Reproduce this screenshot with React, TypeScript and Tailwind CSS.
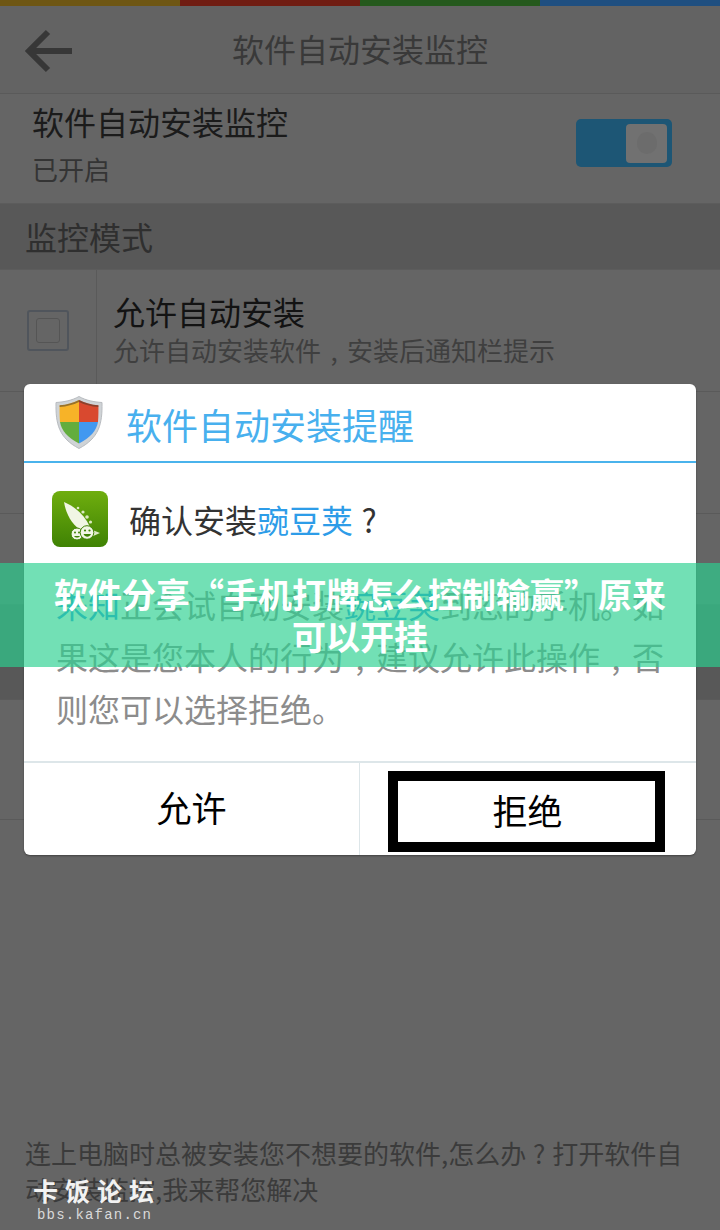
const cjk = "font-['Noto_Sans_CJK_SC','Liberation_Sans',sans-serif]"

// the source phone font puts these marks in the middle of a full-width cell
function Mark({ c }: { c: string }) {
  return <span className="inline-block w-[1em] text-center">{c}</span>
}

function Shield() {
  return (
    <svg width="48" height="53" viewBox="0 0 48 53" className="shrink-0">
      <path d="M24 0.5 C31 4.5 39 6 47 6.5 C47.5 28 44 42 24 52.5 C4 42 0.5 28 1 6.5 C9 6 17 4.5 24 0.5Z" fill="#cfd3d6" stroke="#b9bcc0" />
      <path d="M24 4 V26 H5 C4.5 20 4.5 14 4.6 9.3 C12 8.8 18 7 24 4Z" fill="#f7b328" />
      <path d="M24 4 V26 H43 C43.5 20 43.5 14 43.4 9.3 C36 8.8 30 7 24 4Z" fill="#d9492f" />
      <path d="M24 26 V47.5 C13 41.5 6.5 35 5 26Z" fill="#63ad3d" />
      <path d="M24 26 V47.5 C35 41.5 41.5 35 43 26Z" fill="#4198f0" />
      <path d="M24 4 C18 7 12 8.8 4.6 9.3 L4.6 11 C12 10.5 18 8.8 24 6 C30 8.8 36 10.5 43.4 11 L43.4 9.3 C36 8.8 30 7 24 4Z" fill="#4a3a2a" opacity="0.55" />
    </svg>
  )
}

function PeaLogo() {
  return (
    <svg width="56" height="56" viewBox="0 0 56 56" className="shrink-0">
      <defs>
        <linearGradient id="pea-bg" x1="0" y1="0" x2="0" y2="1">
          <stop offset="0" stopColor="#6fae0e" />
          <stop offset="1" stopColor="#3f8204" />
        </linearGradient>
      </defs>
      <rect width="56" height="56" rx="8" fill="url(#pea-bg)" />
      <path d="M12 11 C24 16 33 25 38 36 L30 40 C21 35 14 24 12 11Z" fill="#f1f6e4" />
      <circle cx="26" cy="17" r="1.3" fill="#dbe8c0" />
      <circle cx="31" cy="21" r="1.6" fill="#dbe8c0" />
      <circle cx="35" cy="26" r="1.8" fill="#dbe8c0" />
      <circle cx="38.5" cy="31" r="1.6" fill="#dbe8c0" />
      <path d="M38 38 L48 42 L39 46Z" fill="#dce9c4" />
      <circle cx="25" cy="43" r="6" fill="#f1f6e4" stroke="#3f8204" />
      <circle cx="35" cy="41.5" r="6.8" fill="#f1f6e4" stroke="#3f8204" />
      <circle cx="23" cy="41.5" r="1" fill="#3f8204" />
      <circle cx="27" cy="41.5" r="1" fill="#3f8204" />
      <circle cx="33" cy="39.5" r="1.1" fill="#3f8204" />
      <circle cx="37.5" cy="39.5" r="1.1" fill="#3f8204" />
      <path d="M31.5 43 C33 46.5 37.5 46.5 39 43Z" fill="#3f8204" />
      <path d="M22 45 C23.5 47 26.5 47 28 45Z" fill="#3f8204" />
    </svg>
  )
}

function CheckRow({ children }: { children?: React.ReactNode }) {
  return (
    <div className="flex h-[122px] border-b border-[#5a5a5a]">
      <div className="flex w-[97px] shrink-0 items-center justify-center border-r border-[#5a5a5a] pr-[1px]">
        <div className="flex h-[41px] w-[42px] items-center justify-center rounded-[3px] border-2 border-[#50555c]">
          <div className="h-[25px] w-[24px] rounded-[3px] border border-[#555555]" />
        </div>
      </div>
      {children}
    </div>
  )
}

export default function App() {
  return (
    <div className={`relative flex h-[1230px] w-[720px] flex-col overflow-hidden bg-[#656565] ${cjk}`}>
      <div className="flex h-[6px]">
        <div className="flex-1 bg-[#6e5613]" />
        <div className="flex-1 bg-[#701d12]" />
        <div className="flex-1 bg-[#25591d]" />
        <div className="flex-1 bg-[#1f4f80]" />
      </div>

      <header className="relative flex h-[88px] items-center justify-center border-b border-[#5a5a5a] bg-[#636363] pb-1">
        <svg width="48" height="44" viewBox="0 0 48 44" className="absolute left-[25px] top-[23px]">
          <path d="M47 22 H5 M23 3 L4 22 L23 41" fill="none" stroke="#373737" strokeWidth="6" />
        </svg>
        <h1 className="text-[32px] font-normal leading-none text-[#393939]">软件自动安装监控</h1>
      </header>

      <div className="flex h-[109px] items-start justify-between pl-[32px] pr-[48px] pt-[5px]">
        <div>
          <div className="text-[32px] leading-[44px] text-[#1b1b1b]">软件自动安装监控</div>
          <div className="mt-[8px] text-[26px] leading-[36px] text-[#343434]">已开启</div>
        </div>
        <div className="mt-[20px] flex h-[48px] w-[96px] items-center justify-end rounded-[5px] bg-[#1d5675] pr-[5px]">
          <div className="flex h-[39px] w-[41px] items-center justify-center rounded-[4px] bg-[#717171]">
            <div className="h-[22px] w-[20px] rounded-full bg-[#6c6c6c]" />
          </div>
        </div>
      </div>

      <div className="flex h-[67px] items-center border-y border-[#5c5c5c] bg-[#585858] pb-[2px] pl-[25px] text-[32px] text-[#2f2f2f]">
        监控模式
      </div>

      <CheckRow>
        <div className="pl-[16px] pt-[19px]">
          <div className="text-[32px] leading-[44px] text-[#131313]">允许自动安装</div>
          <div className="text-[26px] leading-[34px] text-[#3f3f3f]">
            允许自动安装软件<Mark c="," />安装后通知栏提示
          </div>
        </div>
      </CheckRow>
      <CheckRow />
      <div className="h-[90px]" />
      <div className="h-[95px] border-t border-[#5a5a5a] bg-[#585858]" />
      <div className="h-[121px] border-y border-[#5a5a5a]" />

      <div className="mt-auto pl-[25px] pr-[30px] pb-[23px] text-[26px] leading-[36px] text-[#3b3b3b]">
        连上电脑时总被安装您不想要的软件,怎么办<Mark c="?" />打开软件自动安装监控,我来帮您解决
      </div>

      <div className="absolute left-[24px] top-[384px] flex h-[471px] w-[672px] flex-col rounded-[6px] bg-white shadow-[0_1px_2px_rgba(0,0,0,0.35)]">
        <div className="flex h-[79px] items-center border-b-2 border-[#4ab3ec] pl-[31px]">
          <Shield />
          <span className="ml-[23px] mt-[2px] text-[36px] leading-none text-[#48b0ee]">软件自动安装提醒</span>
        </div>
        <div className="flex items-center pl-[28px] pt-[28px]">
          <PeaLogo />
          <span className="ml-[21px] text-[32px] leading-none text-[#333333]">
            确认安装<span className="text-[#2d9ce8]">豌豆荚</span><Mark c="?" />
          </span>
        </div>
        <p className="mt-[31px] pl-[32px] pr-[28px] text-[32px] leading-[52px] text-[#8c8c8c]">
          <span className="text-[#2d9ce8]">未知</span>正会试自动安装<span className="text-[#2d9ce8]">豌豆荚</span>到您的手机。如果这是您本人的行为<Mark c="," />建议允许此操作<Mark c="," />否则您可以选择拒绝。
        </p>
        <div className="mt-auto flex h-[94px] border-t-2 border-[#dde6e9]">
          <div className="flex w-1/2 items-center justify-center border-r border-[#dde6e9] pb-[3px] text-[35px] text-black">允许</div>
          <div className="flex w-1/2 items-start pl-[28px] pt-[8px]">
            <div className="flex h-[81px] w-[277px] items-center justify-center border-[10px] border-black pb-[3px] pl-[2px] text-[35px] text-black">拒绝</div>
          </div>
        </div>
      </div>

      <div className="absolute left-0 top-[563px] flex h-[104px] w-full items-center justify-center bg-[rgba(43,208,144,0.665)] px-[50px] text-center text-[34px] font-bold leading-[42px] text-white">
        软件分享“手机打牌怎么控制输赢”原来可以开挂
      </div>

      <div className="absolute left-[33px] top-[1175px] text-[#f2f2f2]">
        <div className="text-[25px] font-bold leading-[30px] tracking-[7px]">卡饭论坛</div>
        <div className="ml-[4px] mt-[1px] font-['Liberation_Mono',monospace] text-[14px] leading-[18px] tracking-[1.2px] text-[#d9d9d9]">bbs.kafan.cn</div>
      </div>
    </div>
  )
}
